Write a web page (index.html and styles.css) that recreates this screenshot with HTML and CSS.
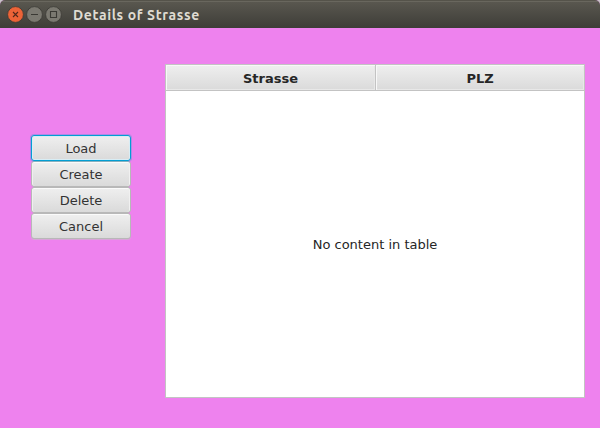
FILE: index.html
```html
<!DOCTYPE html>
<html lang="de">
<head>
<meta charset="utf-8">
<title>Details of Strasse</title>
<link rel="stylesheet" href="styles.css">
</head>
<body>
<div class="window">
  <header class="titlebar">
    <div class="controls">
      <svg class="control close" viewBox="0 0 17 17"><circle cx="8.5" cy="8.5" r="7.9"/><path d="M6 6l5 5M11 6l-5 5"/></svg>
      <svg class="control" viewBox="0 0 17 17"><circle cx="8.5" cy="8.5" r="7.9"/><path d="M5 8.5h7"/></svg>
      <svg class="control" viewBox="0 0 17 17"><circle cx="8.5" cy="8.5" r="7.9"/><path d="M5.5 5.5h6v6h-6z"/></svg>
    </div>
    <h1 class="title">Details of Strasse</h1>
  </header>
  <main class="content">
    <nav class="actions">
      <button class="button focused">Load</button>
      <button class="button">Create</button>
      <button class="button">Delete</button>
      <button class="button">Cancel</button>
    </nav>
    <section class="table">
      <div class="table-head">
        <div class="column">Strasse</div>
        <div class="column">PLZ</div>
      </div>
      <div class="table-body">No content in table</div>
    </section>
  </main>
</div>
</body>
</html>
```
FILE: styles.css
```css
* { box-sizing: border-box; }
body {
  margin: 0;
  background: #c8c5c8;
  font: 13px "DejaVu Sans", sans-serif;
  color: #262626;
}
.window {
  display: flex;
  flex-direction: column;
  height: 428px;
  overflow: hidden;
  border-radius: 5px 5px 0 0;
  background: #ee82ee;
}
.titlebar {
  display: flex;
  align-items: center;
  flex: 0 0 28px;
  padding: 0 7px;
  border-top: 1px solid #55534a;
  background: linear-gradient(#69675e 0 1px, #59574f 1px, #3e3d38);
}
.controls { display: flex; gap: 2px; }
.control { display: block; width: 17px; height: 17px; }
.control circle { fill: #7b7971; stroke: #3b3a35; stroke-width: .8; }
.control path { fill: none; stroke: #3a3934; stroke-width: 1.1; }
.close circle { fill: #ec6337; }
.close path { stroke: #52271a; }
.title {
  margin: 0 0 0 11px;
  font: bold 14px/20px Ubuntu, "Noto Sans", sans-serif;
  letter-spacing: .62px;
  color: #dfdbd2;
  white-space: nowrap;
}
.content {
  display: flex;
  flex: 1;
  align-items: flex-start;
  padding: 36px 15px 30px 31px;
  gap: 34px;
}
.actions {
  display: flex;
  flex-direction: column;
  width: 100px;
  margin-top: 71px;
}
.button {
  height: 26px;
  padding: 0;
  border: 1px solid #b8b8b8;
  border-radius: 3px;
  background: linear-gradient(#efefef, #dadada);
  box-shadow: inset 0 1px #fafafa, inset 1px 0 #f0f0f0, inset -1px 0 #f0f0f0;
  font: inherit;
  color: #333;
}
.button:last-child { box-shadow: inset 0 1px #fafafa, 0 1px #d9a5d9; }
.focused {
  position: relative;
  border-color: #039ed3;
  box-shadow: 0 0 0 1px #039ed344, inset 0 0 0 1px #d8edf5;
}
.table {
  display: flex;
  flex: 1;
  flex-direction: column;
  align-self: stretch;
  border: 1px solid #c3c3c3;
  background: #fff;
}
.table-head { display: grid; grid-template-columns: 210px 1fr; height: 26px; }
.column {
  display: flex;
  align-items: center;
  justify-content: center;
  padding-top: 2px;
  border-right: 1px solid #c3c3c3;
  border-bottom: 1px solid #c3c3c3;
  background: linear-gradient(#efefef, #dadada);
  box-shadow: inset 1px 1px #f8f8f8, inset -1px -1px #e8e8e8;
  font-weight: bold;
}
.column:last-child { border-right: 0; }
.table-body {
  display: flex;
  flex: 1;
  align-items: center;
  justify-content: center;
}
```
